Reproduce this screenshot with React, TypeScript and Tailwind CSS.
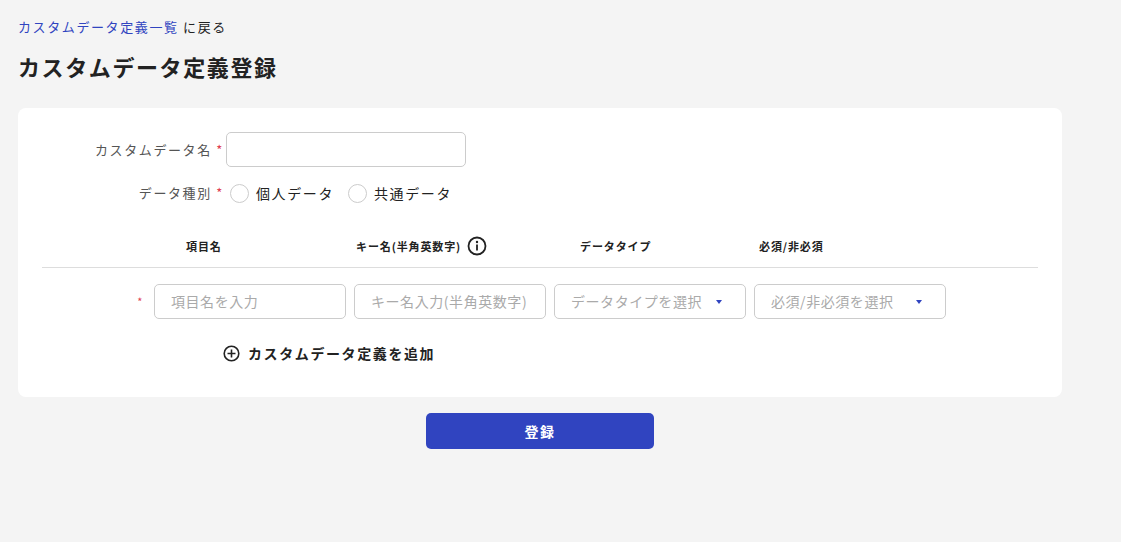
import React from "react";

const F = { fontFamily: '"Noto Sans CJK JP", "Noto Sans", sans-serif' };

function Caret() {
  return <svg width="8" height="6" viewBox="0 0 8 6"><path d="M1 1h6L4 5z" fill="#3044c0" /></svg>;
}

export default function App() {
  return (
    <div style={F} className="w-[1121px] h-[542px] bg-[#f4f4f4] text-[#222] overflow-hidden tracking-[0.1em]">
      <div className="pl-[18px] pt-[16px]">
        <div className="text-[13px] leading-[22px]"><span className="text-[#3044c0]">カスタムデータ定義一覧</span> に戻る</div>
        <h1 className="mt-[12px] text-[22px] font-bold leading-[32px] text-[#222]">カスタムデータ定義登録</h1>
        <div className="mt-[26px] w-[1044px] h-[289px] bg-white rounded-[8px] pt-[24px] px-[24px]">
          <div className="flex items-center h-[35px]">
            <div className="w-[184px] text-right text-[13px] text-[#555] pr-[2px] whitespace-nowrap">カスタムデータ名 <span className="text-[#e04050]">*</span></div>
            <div className="w-[240px] h-[35px] border border-[#ccc] rounded-[5px]" />
          </div>
          <div className="flex items-center mt-[12px] h-[28px]">
            <div className="w-[184px] text-right text-[13px] text-[#555] pr-[2px] whitespace-nowrap">データ種別 <span className="text-[#e04050]">*</span></div>
            <div className="ml-[4px] flex items-center text-[14px] text-[#222]">
              <span className="w-[19px] h-[19px] rounded-full border border-[#ccc]" />
              <span className="ml-[7px]">個人データ</span>
              <span className="ml-[14px] w-[19px] h-[19px] rounded-full border border-[#ccc]" />
              <span className="ml-[7px]">共通データ</span>
            </div>
          </div>
          <div className="flex items-center mt-[26px] h-[26px] text-[11px] font-bold text-[#222] tracking-[0.08em]">
            <div className="w-[144px]" />
            <div className="w-[170px]">項目名</div>
            <div className="w-[224px] flex items-center whitespace-nowrap">キー名(半角英数字)
              <svg className="ml-[6px]" width="20" height="20" viewBox="0 0 20 20"><circle cx="10" cy="10" r="8.5" fill="none" stroke="#222" strokeWidth="1.8" /><circle cx="10" cy="6" r="1.2" fill="#222" /><rect x="9.1" y="8.5" width="1.8" height="6" fill="#222" /></svg>
            </div>
            <div className="w-[179px]">データタイプ</div>
            <div>必須/非必須</div>
          </div>
          <div className="mt-[8px] border-t border-[#ddd] w-[996px]" />
          <div className="flex items-center mt-[16px] gap-[8px] text-[14px] text-[#aaa] tracking-[0.04em]">
            <div className="w-[104px] text-right text-[#e04050] text-[11px] pr-[3px]">*</div>
            <div className="w-[192px] h-[35px] border border-[#ccc] rounded-[5px] px-[16px] flex items-center">項目名を入力</div>
            <div className="w-[192px] h-[35px] border border-[#ccc] rounded-[5px] px-[16px] flex items-center whitespace-nowrap overflow-hidden">キー名入力(半角英数字)</div>
            <div className="w-[192px] h-[35px] border border-[#ccc] rounded-[5px] pl-[16px] pr-[22px] flex items-center justify-between">データタイプを選択<Caret /></div>
            <div className="w-[192px] h-[35px] border border-[#ccc] rounded-[5px] pl-[16px] pr-[22px] flex items-center justify-between">必須/非必須を選択<Caret /></div>
          </div>
          <div className="flex items-center mt-[24px] ml-[181px] text-[14px] font-bold text-[#222]">
            <svg width="17" height="17" viewBox="0 0 17 17"><circle cx="8.5" cy="8.5" r="7.3" fill="none" stroke="#222" strokeWidth="1.6" /><path d="M8.5 4.5v8M4.5 8.5h8" stroke="#222" strokeWidth="1.6" /></svg>
            <span className="ml-[8px]">カスタムデータ定義を追加</span>
          </div>
        </div>
        <div className="mt-[16px] ml-[408px] w-[228px] h-[36px] rounded-[5px] bg-[#3044c0] text-white text-[14px] font-bold flex items-center justify-center">登録</div>
      </div>
    </div>
  );
}
